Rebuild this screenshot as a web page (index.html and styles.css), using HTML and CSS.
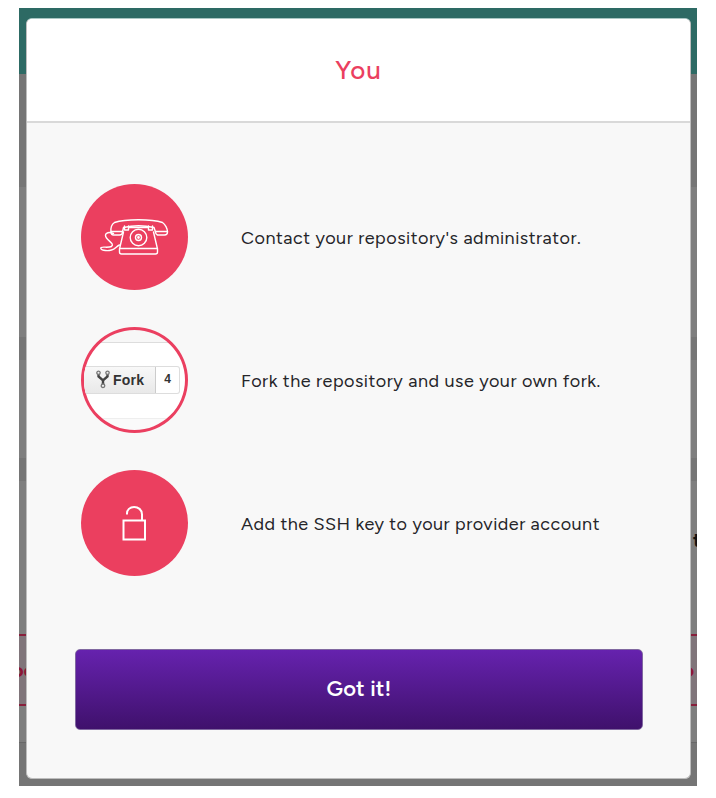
FILE: index.html
```html
<!DOCTYPE html>
<html lang="en">
<head>
<meta charset="utf-8">
<title>Repository access</title>
<link rel="stylesheet" href="styles.css">
</head>
<body>
<main class="stage">
  <div class="backdrop" aria-hidden="true">
    <div class="topbar"></div>
    <div class="band intro"></div>
    <div class="panel first"></div>
    <div class="band"></div>
    <div class="panel second"></div>
    <div class="band"></div>
    <div class="panel third"><span>t</span></div>
    <div class="choices"><span class="left">oc</span><span class="right">o</span></div>
    <div class="panel last"></div>
    <div class="footer"></div>
  </div>
  <section class="modal" role="dialog" aria-labelledby="title">
    <header><h1 id="title">You</h1></header>
    <div class="content">
      <ul class="options">
        <li>
          <div class="disc">
            <svg width="106" height="106" viewBox="0.5 0 106 106" fill="none" stroke="#fff" stroke-width="1.4" stroke-linejoin="round" stroke-linecap="round">
              <path d="M30.500 48C30 44 31 40.500 34 38.500C45 34.800 71 34.800 82 38.500C85 40.500 87 45 87 48Q87 51 84 51H77Q75 50 75 48L73.500 43.500Q58 40 43 43.500L42 48Q42 51 39 51H33Q30.500 51 30.500 48Z"/>
              <path d="M30.500 47.500H42M75 47.500H87M44 42V46H48V42M68 42V46H72V42M48 43.500H68M43 48L39 65V68Q39 70 41 70H75Q77 70 77 68V65L73 48M39 64.500H77"/>
              <circle cx="58" cy="53.500" r="8.300"/><circle cx="58" cy="53.500" r="3"/><circle cx="58" cy="53.500" r=".7"/>
              <path d="M33 49.500C27 47 23 50 26 54C29 58 34 60 31 62.500C28 64 22 62.500 20.500 63.500C19 66 26 67.500 31 66C35 65 36 62 39 61"/>
            </svg>
          </div>
          <p class="contact">Contact your repository's administrator.</p>
        </li>
        <li>
          <div class="disc fork-disc">
            <div class="fork-button">
              <span class="fork-label">
                <svg width="14" height="19" viewBox="0 0 14 19" fill="none" stroke="#444"><path stroke-width="2.400" d="M2.500 4V6.500L7 10.500L11.500 6.500V4M7 10.500V14"/><g fill="#eee" stroke="#777" stroke-width="1.300"><circle cx="2.500" cy="2.800" r="1.700"/><circle cx="11.500" cy="2.800" r="1.700"/><circle cx="7" cy="15.800" r="1.800"/></g></svg>
                <b>Fork</b>
              </span>
              <b class="fork-count">4</b>
            </div>
          </div>
          <p class="fork">Fork the repository and use your own fork.</p>
        </li>
        <li>
          <div class="disc">
            <svg width="106" height="106" viewBox="0 1 106 106" fill="none" stroke="#fff" stroke-width="2"><path d="M42.500 51.500H64V70.500H42.500ZM46 45.500C45 35.500 61 35.500 61 45.500V51"/></svg>
          </div>
          <p class="ssh">Add the SSH key to your provider account</p>
        </li>
      </ul>
      <button type="button">Got it!</button>
    </div>
  </section>
</main>
</body>
</html>
```
FILE: styles.css
```css
* { box-sizing: border-box; }
body { margin: 0; background: #fff; font-family: Figtree, Lato, "Liberation Sans", sans-serif; }
.stage { display: grid; width: 678px; height: 778px; margin: 8px 0 0 19px; overflow: hidden; }
.backdrop, .modal { grid-area: 1 / 1; }
.backdrop { display: flex; flex-direction: column; background: #7e7e7e; }
.topbar { height: 66px; background: #2d6a64; }
.band { height: 23px; background: #757575; }
.band.intro { height: 113px; }
.first { height: 150px; }
.second { height: 98px; }
.third { height: 153px; display: flex; justify-content: flex-end; padding-top: 47px; color: #111; font-size: 20px; font-weight: 700; line-height: 24px; }
.third span { width: 4px; }
.choices { display: flex; justify-content: space-between; align-items: center; height: 72px; border: solid #871f3b; border-width: 2px 0; background: #80757a; color: #8b1636; font-size: 20px; font-weight: 700; }
.choices .left { margin-left: -7px; }
.choices .right { margin-right: 3px; }
.last { height: 37px; border-bottom: 1px solid #686868; }
.footer { flex: 1; background: #757575; }
.modal { display: flex; flex-direction: column; width: 665px; height: 761px; margin: 10px 0 0 7px; overflow: hidden; border: 1px solid #bdbdbd; border-top-color: #a9c7c4; border-radius: 6px; background: #f8f8f8; }
header { display: flex; align-items: center; justify-content: center; height: 104px; border-bottom: 2px solid #d9d9d9; background: #fff; }
h1 { margin: 0; color: #eb3f60; font-size: 26px; font-weight: 500; line-height: 32px; letter-spacing: .9px; }
.content { padding: 61px 48px 0; }
.options { display: flex; flex-direction: column; gap: 37px; margin: 0; padding: 0 0 0 6px; list-style: none; }
li { display: flex; align-items: center; gap: 53px; height: 106px; }
.disc { display: flex; align-items: center; flex: none; width: 107px; height: 106px; overflow: hidden; border-radius: 50%; background: #eb3f5f; }
p { margin: 0; padding-top: 2px; color: #252529; font-size: 18px; line-height: 24px; white-space: nowrap; }
.contact { letter-spacing: .5px; }
.fork { letter-spacing: .5px; }
.ssh { letter-spacing: .47px; }
.fork-disc { border: 3px solid #eb3f60; background: linear-gradient(#f7f7f7 12px, #ddd 12px, #ddd 13px, #fff 13px, #fff 88px, #eee 88px, #eee 89px, #fafafa 89px); }
.fork-button { display: flex; width: 96px; height: 28px; border: 1px solid #ddd; border-left: 0; border-radius: 0 3px 3px 0; background: #fff; color: #333; font-family: "Liberation Sans", sans-serif; }
.fork-label { display: flex; align-items: center; gap: 3px; width: 72px; padding: 0 0 1px 12px; border-right: 1px solid #ccc; background: linear-gradient(#f8f8f8, #e9e9e9); font-size: 14px; letter-spacing: .2px; }
.fork-count { flex: 1; font-size: 12px; line-height: 24px; text-align: center; }
button { display: block; width: 568px; height: 81px; margin-top: 73px; padding: 0 0 2px; border: 1px solid #8068a0; border-radius: 5px; background: linear-gradient(#6622ae, #3f116c); color: #fff; font: 600 22px/28px Figtree, Lato, "Liberation Sans", sans-serif; letter-spacing: .1px; }
```
